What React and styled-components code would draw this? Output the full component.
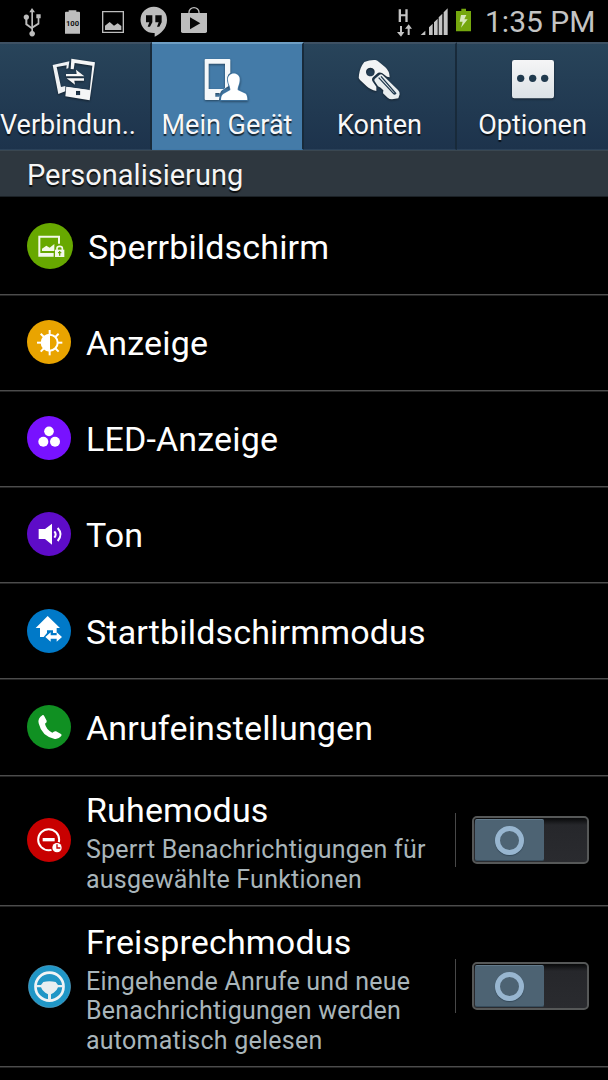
import React from 'react';
import styled, { createGlobalStyle } from 'styled-components';

const GlobalStyle = createGlobalStyle`
  * { box-sizing: border-box; }
  html, body { margin: 0; background: #000; }
  body { font-family: Roboto, "Noto Sans", sans-serif; overflow: hidden; }
  svg { display: block; flex: none; }
`;

const Screen = styled.div`
  width: 608px;
  height: 1080px;
  overflow: hidden;
  background: #000;
  color: #fff;
`;

const StatusBar = styled.header`
  display: flex;
  justify-content: space-between;
  height: 42px;
`;

const StatusGroup = styled.div`
  display: flex;
`;

const Clock = styled.span`
  width: 123px;
  font-size: 30px;
  line-height: 43px;
  white-space: nowrap;
  color: #c4c4c4;
`;

const TabBar = styled.nav`
  display: grid;
  grid-template-columns: 152px 152px 153px 151px;
  height: 108px;
`;

const Tab = styled.div`
  display: flex;
  flex-direction: column;
  align-items: center;
  overflow: hidden;
  border-top: 2px solid ${p => (p.$active ? '#6f9fc4' : '#3e5163')};
  border-right: ${p => (p.$last ? 0 : 2)}px solid #182a3a;
  border-bottom: 1px solid ${p => (p.$active ? '#3f78a8' : '#2a4159')};
  background: ${p => (p.$active ? '#447ba8' : 'linear-gradient(#28445a, #1d334c)')};
`;

const TabIcon = styled.svg`
  margin-top: 14px;
  filter: drop-shadow(0 1.5px 1px rgba(0, 0, 0, 0.45));
`;

const TabLabel = styled.span`
  align-self: ${p => (p.$clipped ? 'flex-start' : 'center')};
  margin-top: 7px;
  font-size: 27px;
  line-height: 32px;
  white-space: nowrap;
  text-shadow: 0 2px 1px rgba(0, 0, 0, 0.7);
  color: #f8f8f8;
`;

const SectionTitle = styled.h2`
  height: 47px;
  margin: 0;
  padding-left: 27px;
  border-top: 1px solid #3a4751;
  border-bottom: 1px solid #1b2126;
  background: #2e373f;
  font-size: 29px;
  font-weight: 400;
  line-height: 49px;
  color: #f5f5f5;
  text-shadow: 0 2px 1px rgba(0, 0, 0, 0.8);
`;

const Row = styled.div`
  display: flex;
  align-items: center;
  height: ${p => p.$height}px;
  padding: 0 19px ${p => p.$lift || 0}px 27px;
  border-bottom: 1px solid #4c4c4c;
  box-shadow: 0 1px #232323;
`;

const RowText = styled.div`
  flex: 1;
  padding-top: ${p => (p.$tall ? 3 : 0)}px;
  padding-left: 15px;
`;

const RowTitle = styled.div`
  font-size: 34px;
  line-height: 40px;
  padding-top: 2px;
  white-space: nowrap;
  letter-spacing: 0.16px;
`;

const RowNote = styled.div`
  padding-top: 5px;
  font-size: 25px;
  line-height: 29.6px;
  white-space: nowrap;
  color: #a9b5ba;
  letter-spacing: 0.24px;
`;

const SwitchArea = styled.div`
  display: flex;
  align-items: center;
  height: 54px;
  padding-left: 16px;
  border-left: 1px solid #484848;
`;

const Track = styled.div`
  width: 117px;
  height: 48px;
  padding: 1px;
  border: 2px solid #565858;
  border-radius: 5px;
  background: linear-gradient(#08090a, #26272b 7px, #2a2b2f);
`;

const Thumb = styled.div`
  display: grid;
  place-items: center;
  width: 69px;
  height: 42px;
  border-top: 1px solid #627a8b;
  border-bottom: 1px solid #374d5d;
  border-radius: 2px;
  background: #4d6373;
`;

const Ring = styled.div`
  width: 29px;
  height: 29px;
  border: 5px solid #98b6d0;
  border-radius: 50%;
  box-shadow: 0 1px 1px #34495a;
`;

const RowIcon = styled.svg`
  width: ${p => p.$size || 44}px;
  height: ${p => p.$size || 44}px;
  margin: 0 ${p => ((p.$size || 44) < 44 ? 0.5 : 0)}px;
`;

const NotificationIcons = () => (
  <svg width="220" height="42" viewBox="0 0 660 126" fill="#bdbdbd">
    <path d="M96 24l-8 13h6v43l-12-9V59a8 8 0 1 0-6 0v15l18 13v6a8.500 8.500 0 1 0 5 0v-8l19-12V55h4V43h-13v12h4v14l-14 9V37h6z" />
    <path d="M195 38q0-3 3-3h8v-4h23v4h8q3 0 3 3v63h-45z" />
    <text x="217.500" y="78" fontSize="23" fontWeight="700" textAnchor="middle" fill="#111">100</text>
    <path fillRule="evenodd" d="M306 33h66v66h-66zM310 37v58h58V37zM315 90V77l14-11 13 11 11-7 11 8v12z" />
    <path d="M461 20a39 39 0 0 1 40 40c0 25-18 41-37 50V99h-3a39 39 0 0 1 0-79z" />
    <path fill="#080808" d="M438 46h19v21l-7 13h-7l5-13h-10zm28 0h19v21l-7 13h-7l5-13h-10z" />
    <path fill="none" stroke="#bdbdbd" strokeWidth="4" d="M567 40v-3a15 14 0 0 1 30 0v3" />
    <path d="M543 39h78v55q0 5-5 5h-68q-5 0-5-5z" />
    <path fill="#080808" d="M570 52l31 18-31 18z" />
  </svg>
);

const SignalIcons = () => (
  <svg width="88" height="42" viewBox="51 0 264 126" fill="#c4c4c4">
    <path d="M56 28h7v15h13V28h7v38h-7V49H63v17h-7z" />
    <path d="M60 78h6v18h7L63 110 51 96h9zM83 105h6V86h7L86 73 75 86h8z" />
    <path d="M122 105l14-13v13zM147 105V82l11-11v34zM162 105V67l11-11v49zM176 105V52l11-11v64zM191 105V37l12-12v80z" />
    <path fill="#75a70e" d="M228 33h16v-7h14v7h15v61h-45z" />
    <path fill="#d8e8bd" d="M243 45h16l-6 13h10l-20 25 5-18h-9z" />
  </svg>
);

const ConnectionsIcon = () => (
  <TabIcon width="46" height="44" viewBox="156 54 138 132">
    <path fill="#eff2f4" fillRule="evenodd" d="M158 75l50-11-3 21-6 1 1-10-30 5 13 60 13-3v16l-21 8z" />
    <path fill="#f5f6f7" fillRule="evenodd" d="M214 56l71 11-16 114-73-12 3-28 70 10 8-74-53-8-3 19-9-1zM228 152v14h13v-14z" />
    <path fill="#f5f6f7" fillRule="evenodd" d="M199 140l70 10-3 24-66-10zM228 152v14h13v-14z" />
    <path fill="#f7f7f7" d="M198 102h32l-2-13 25 20h-55zM252 115h-52l25 19-2-12h29z" />
  </TabIcon>
);

const DeviceIcon = () => (
  <TabIcon width="46" height="44" viewBox="612 54 138 132">
    <path fill="#f5f8fa" fillRule="evenodd" d="M617 57h71q3 0 3 3v39q-12 7-8 24l3 15-20 13q-7 5-9 29h-40q-3 0-3-3V60q0-3 3-3zM626 71v76h49V71zM646 159v11h13v-11z" />
    <path fill="#fff" stroke="#447ba8" strokeWidth="5" paintOrder="stroke" d="M684 121c-3-27 38-27 35 0-1 14-6 18-6 29l24 11q5 5 5 19h-79q0-13 7-18l21-12c0-12-6-15-7-29z" />
  </TabIcon>
);

const KeyIcon = () => (
  <TabIcon width="46" height="44" viewBox="156 54 138 132">
    <path fill="#f2f4f5" fillRule="evenodd" d="M178 66q17-7 33-6 5 0 10 5l20 17q13 12 13 30-4-2-8-2l-15-11q-9-4-16 3l-11 10q-6 6 0 14l10 14v13q-19-4-29-14l-20-19q-6-6-3-16 3-22 16-38zM196 83a13 13 0 1 0 .1 0z" />
    <path fill="#e8edef" d="M209 124q-3-5 1-8l14-12q5-3 9 1l46 45q6 6 5 13l-4 12-19 3q-8 0-13-5l-14-13 1-9-8-8-8-4z" />
    <path fill="none" stroke="#20394e" strokeWidth="4" d="M221 113l44 47q4 4 7 0L228 109" />
  </TabIcon>
);

const OptionsIcon = () => (
  <TabIcon width="46" height="44" viewBox="614 54 138 132">
    <defs>
      <linearGradient id="tile" x1="0" y1="0" x2="0" y2="1">
        <stop offset="0" stopColor="#f5f5f6" />
        <stop offset="1" stopColor="#dce2e6" />
      </linearGradient>
    </defs>
    <rect x="620" y="60" width="126" height="115" rx="7" fill="url(#tile)" />
    <g fill="#203a4e">
      <circle cx="646" cy="115" r="11" />
      <circle cx="682" cy="115" r="11" />
      <circle cx="718" cy="115" r="11" />
    </g>
  </TabIcon>
);

const LockScreenIcon = () => (
  <RowIcon $size={46} viewBox="82 69 138 138">
    <circle cx="151" cy="138" r="69" fill="#67a800" />
    <path fill="#f3f8ea" fillRule="evenodd" d="M116 107h65v24h-6v-18h-53v46h40v11h-46z" />
    <path fill="#f3f8ea" d="M127 153v-7l13-9 10 6 14-11v21z" />
    <path fill="none" stroke="#f3f8ea" strokeWidth="5" d="M172 152v-7q0-6 8-6t8 6v7" />
    <path fill="#f3f8ea" d="M166 149h28v22h-28z" />
    <path fill="#67a800" d="M178 153h4v3h3v4h-3v7h-4v-7h-3v-4h3z" />
  </RowIcon>
);

const DisplayIcon = () => (
  <RowIcon viewBox="82 360 132 132">
    <circle cx="148" cy="426" r="66" fill="#e9a400" />
    <g stroke="#fff" strokeWidth="6">
      {[0, 45, 90, 135, 180, 225, 270, 315].map(a => (
        <path key={a} d="M150 404V390" transform={`rotate(${a} 150 428)`} />
      ))}
    </g>
    <circle cx="150" cy="428" r="24" fill="none" stroke="#fff" strokeWidth="6" />
    <path fill="#fff" d="M151 403a25 25 0 0 0 0 50z" />
  </RowIcon>
);

const LedIcon = () => (
  <RowIcon viewBox="82 79 132 132">
    <circle cx="148" cy="145" r="66" fill="#7812ff" />
    <g fill="#fff">
      <circle cx="148" cy="125" r="14.500" />
      <circle cx="131" cy="156" r="15" />
      <circle cx="166" cy="156" r="15" />
    </g>
  </RowIcon>
);

const SoundIcon = () => (
  <RowIcon viewBox="82 367 132 132">
    <circle cx="148" cy="433" r="66" fill="#5e0cc8" />
    <path fill="#fff" d="M117 418h19l21-16v63l-21-17h-19z" />
    <path fill="none" stroke="#fff" strokeWidth="6" d="M164 425q8 9 0 19M174 415q17 19 0 39" />
  </RowIcon>
);

const HomeIcon = () => (
  <RowIcon viewBox="82 86 132 132">
    <circle cx="148" cy="152" r="66" fill="#0079c8" />
    <path fill="#fff" d="M108 143l36-36 37 36h-10v15h-11v-8h-18v8l-10 12h-11v-27z" />
    <path fill="#fff" d="M137 170l16-14v9h18v-9l16 14-16 14v-9h-18v9z" />
  </RowIcon>
);

const CallIcon = () => (
  <RowIcon viewBox="82 375 132 132">
    <circle cx="148" cy="441" r="66" fill="#109022" />
    <path fill="#fff" d="M129 405q3-1 5 4l7 13q2 5-5 9 3 17 22 27 6-6 11-4l15 8q4 3 0 7-9 10-19 8-39-8-48-47-4-15 12-25z" />
  </RowIcon>
);

const QuietIcon = () => (
  <RowIcon viewBox="82 144 132 132">
    <circle cx="148" cy="210" r="66" fill="#c80000" />
    <circle cx="147" cy="209" r="31.500" fill="none" stroke="#fff" strokeWidth="6" />
    <path fill="#fff" d="M129 204h36v10h-36z" />
    <circle cx="172" cy="233" r="18" fill="#c80000" />
    <circle cx="172" cy="233" r="14" fill="#fff" />
    <path fill="none" stroke="#c80000" strokeWidth="4" d="M172 223v11h10" />
  </RowIcon>
);

const CarIcon = () => (
  <RowIcon $size={43} viewBox="84 585 129 129">
    <circle cx="148.500" cy="649.500" r="63" fill="#2096c6" stroke="#5cabd0" strokeWidth="2" />
    <circle cx="148.500" cy="650" r="42" fill="none" stroke="#f0f3f5" strokeWidth="8" />
    <path fill="#e9eef0" d="M108 645h15l7-9q18-4 37 0l7 9h15v7h-15q-3 10-13 16l-8 5v17h-9v-17l-8-5q-10-6-13-16h-15z" />
  </RowIcon>
);

const Switch = () => (
  <SwitchArea>
    <Track><Thumb><Ring /></Thumb></Track>
  </SwitchArea>
);

const tabs = [
  { label: 'Verbindun..', icon: ConnectionsIcon, clipped: true },
  { label: 'Mein Gerät', icon: DeviceIcon, active: true },
  { label: 'Konten', icon: KeyIcon },
  { label: 'Optionen', icon: OptionsIcon },
];

const rows = [
  { title: 'Sperrbildschirm', icon: LockScreenIcon, height: 98 },
  { title: 'Anzeige', icon: DisplayIcon, height: 96, lift: 1 },
  { title: 'LED-Anzeige', icon: LedIcon, height: 96, lift: 1 },
  { title: 'Ton', icon: SoundIcon, height: 96, lift: 1 },
  { title: 'Startbildschirmmodus', icon: HomeIcon, height: 96 },
  { title: 'Anrufeinstellungen', icon: CallIcon, height: 97, lift: 1 },
  { title: 'Ruhemodus', icon: QuietIcon, height: 130, lift: 1, note: ['Sperrt Benachrichtigungen für', 'ausgewählte Funktionen'] },
  { title: 'Freisprechmodus', icon: CarIcon, height: 161, note: ['Eingehende Anrufe und neue', 'Benachrichtigungen werden', 'automatisch gelesen'] },
];

export default function App() {
  return (
    <Screen>
      <GlobalStyle />
      <StatusBar>
        <StatusGroup><NotificationIcons /></StatusGroup>
        <StatusGroup>
          <SignalIcons />
          <Clock>1:35 PM</Clock>
        </StatusGroup>
      </StatusBar>
      <TabBar>
        {tabs.map(({ label, icon: Icon, active, clipped }, i) => (
          <Tab key={label} $active={active} $last={i === tabs.length - 1}>
            <Icon />
            <TabLabel $clipped={clipped}>{label}</TabLabel>
          </Tab>
        ))}
      </TabBar>
      <SectionTitle>Personalisierung</SectionTitle>
      {rows.map(({ title, icon: Icon, height, lift, note }) => (
        <Row key={title} $height={height} $lift={lift}>
          <Icon />
          <RowText $tall={Boolean(note)}>
            <RowTitle>{title}</RowTitle>
            {note && <RowNote>{note.map(line => <div key={line}>{line}</div>)}</RowNote>}
          </RowText>
          {note && <Switch />}
        </Row>
      ))}
    </Screen>
  );
}
